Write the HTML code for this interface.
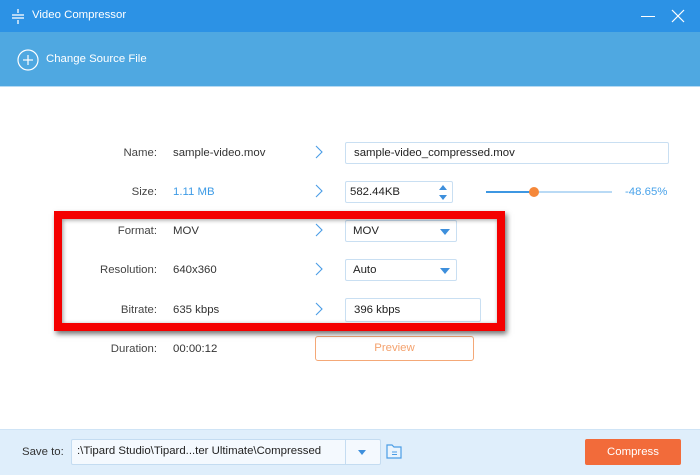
<!DOCTYPE html><html><head><style>
*{margin:0;padding:0;box-sizing:border-box}
body{width:700px;height:475px;overflow:hidden;background:#fff;font-family:"Liberation Sans",sans-serif;font-size:11.4px;color:#333;position:relative}
.a{position:absolute}
.lab{position:absolute;right:543px;text-align:right;color:#444}
.val{position:absolute;left:173px;color:#333}
.chev{position:absolute;left:314px;width:10px;height:14px}
.box{position:absolute;border:1px solid #c9dff2;border-radius:2px;background:#fff;padding-left:9px;line-height:20px;color:#222}
.tri{position:absolute;right:6px;top:8px;width:0;height:0;border-left:5px solid transparent;border-right:5px solid transparent;border-top:6px solid #3d8fdc}
</style></head><body>
<div class="a" style="left:0;top:0;width:700px;height:32px;background:#2c92e5"></div>
<svg class="a" style="left:10px;top:8px" width="16" height="16"><g stroke="#fff" stroke-width="1.3"><line x1="2" y1="7" x2="14" y2="7"/><line x1="2" y1="10" x2="14" y2="10"/><line x1="8" y1="1" x2="8" y2="5"/><line x1="8" y1="12" x2="8" y2="16"/></g></svg>
<div class="a" style="left:32px;top:9px;color:#fff">Video Compressor</div>
<div class="a" style="left:641px;top:16px;width:14px;height:1px;background:#fff"></div>
<svg class="a" style="left:671px;top:9px" width="14" height="14"><g stroke="#fff" stroke-width="1.2"><line x1="1" y1="1" x2="13" y2="13"/><line x1="13" y1="1" x2="1" y2="13"/></g></svg>
<div class="a" style="left:0;top:32px;width:700px;height:54px;background:#4fa8e1"></div>
<div class="a" style="left:0;top:86px;width:700px;height:1px;background:#b6daf3"></div>
<svg class="a" style="left:17px;top:49px" width="22" height="22"><circle cx="11" cy="11" r="10" fill="none" stroke="#fff" stroke-width="1.2"/><g stroke="#fff" stroke-width="1.2"><line x1="6" y1="11" x2="16" y2="11"/><line x1="11" y1="6" x2="11" y2="16"/></g></svg>
<div class="a" style="left:46px;top:53px;color:#fff">Change Source File</div>

<div class="lab" style="top:147px">Name:</div><div class="val" style="top:147px">sample-video.mov</div>
<div class="lab" style="top:186px">Size:</div><div class="val" style="top:186px;color:#3d9be6">1.11 MB</div>
<div class="lab" style="top:225px">Format:</div><div class="val" style="top:225px">MOV</div>
<div class="lab" style="top:264px">Resolution:</div><div class="val" style="top:264px">640x360</div>
<div class="lab" style="top:304px">Bitrate:</div><div class="val" style="top:304px">635 kbps</div>
<div class="lab" style="top:343px">Duration:</div><div class="val" style="top:343px">00:00:12</div>

<svg class="chev" style="top:145px" width="10" height="14"><polyline points="2,1 8,7 2,13" fill="none" stroke="#4a9de6" stroke-width="1.1"/></svg>
<svg class="chev" style="top:184px" width="10" height="14"><polyline points="2,1 8,7 2,13" fill="none" stroke="#4a9de6" stroke-width="1.1"/></svg>
<svg class="chev" style="top:223px" width="10" height="14"><polyline points="2,1 8,7 2,13" fill="none" stroke="#4a9de6" stroke-width="1.1"/></svg>
<svg class="chev" style="top:262px" width="10" height="14"><polyline points="2,1 8,7 2,13" fill="none" stroke="#4a9de6" stroke-width="1.1"/></svg>
<svg class="chev" style="top:302px" width="10" height="14"><polyline points="2,1 8,7 2,13" fill="none" stroke="#4a9de6" stroke-width="1.1"/></svg>

<div class="box" style="left:345px;top:142px;width:324px;height:22px;padding-left:8px">sample-video_compressed.mov</div>
<div class="box" style="left:345px;top:181px;width:108px;height:22px;padding-left:4px">582.44KB
<svg class="a" style="right:4px;top:2px" width="10" height="17"><polygon points="1,6 9,6 5,1" fill="#3d8fdc"/><polygon points="1,11 9,11 5,16" fill="#3d8fdc"/></svg></div>
<div class="a" style="left:486px;top:191px;width:48px;height:2px;background:#3d97e2"></div>
<div class="a" style="left:534px;top:191px;width:78px;height:2px;background:#b9daf5"></div>
<div class="a" style="left:529px;top:187px;width:10px;height:10px;border-radius:50%;background:#f5883a"></div>
<div class="a" style="left:625px;top:186px;color:#4aa3ea">-48.65%</div>
<div class="box" style="left:345px;top:220px;width:112px;height:22px;padding-left:7px">MOV<div class="tri"></div></div>
<div class="box" style="left:345px;top:259px;width:112px;height:22px;padding-left:7px">Auto<div class="tri"></div></div>
<div class="box" style="left:345px;top:298px;width:136px;height:24px;padding-left:8px;line-height:22px">396 kbps</div>
<div class="a" style="left:315px;top:336px;width:159px;height:25px;border:1px solid #f4a877;border-radius:3px;color:#f4a26e;text-align:center;line-height:23px">Preview</div>

<div class="a" style="left:54px;top:211px;width:451px;height:120px;border:8px solid #f40000;box-shadow:2px 3px 5px rgba(0,0,0,.55), inset 1px 1px 4px rgba(0,0,0,.4)"></div>

<div class="a" style="left:0;top:429px;width:700px;height:46px;background:#dfeefb;border-top:1px solid #cfe4f6"></div>
<div class="a" style="left:22px;top:446px;color:#333">Save to:</div>
<div class="a" style="left:71px;top:439px;width:310px;height:26px;border:1px solid #c4dcf1;background:#f4f9fe;border-radius:2px"></div>
<div class="a" style="left:77px;top:445px;color:#222">:\Tipard Studio\Tipard...ter Ultimate\Compressed</div>
<div class="a" style="left:345px;top:440px;width:1px;height:24px;background:#c4dcf1"></div>
<div class="a" style="left:358px;top:450px;border-left:4px solid transparent;border-right:4px solid transparent;border-top:5px solid #3d8fdc"></div>
<svg class="a" style="left:385px;top:442px" width="18" height="18"><path d="M2 3h5l2 2h7v11H2z" fill="#eaf4fd" stroke="#4a9de6" stroke-width="1.2"/><g stroke="#4a9de6"><line x1="7" y1="10" x2="12" y2="10"/><line x1="7" y1="12.5" x2="12" y2="12.5"/></g></svg>
<div class="a" style="left:585px;top:439px;width:96px;height:26px;background:#f26b3a;border-radius:2px;color:#fff;text-align:center;line-height:26px">Compress</div>
</body></html>
